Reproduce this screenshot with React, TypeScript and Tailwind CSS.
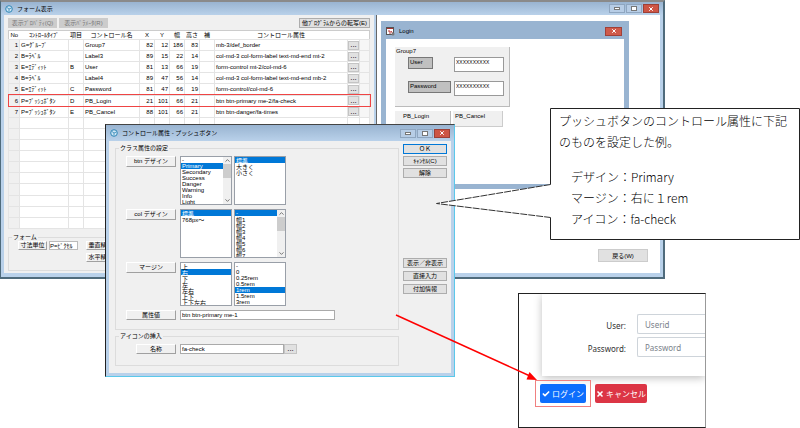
import React from "react";
import { Check, ChevronDown, ChevronUp, X } from "lucide-react";
import clsx from "clsx";

const controls = [
  { type: "G=ｸﾞﾙｰﾌﾟ", item: "", name: "Group7", x: 82, y: 12, w: 186, h: 83, attr: "mb-3/def_border" },
  { type: "B=ﾗﾍﾞﾙ", item: "", name: "Label3", x: 89, y: 15, w: 22, h: 14, attr: "col-md-3 col-form-label text-md-end mt-2" },
  { type: "E=ｴﾃﾞｨｯﾄ", item: "B", name: "User", x: 81, y: 13, w: 66, h: 19, attr: "form-control mt-2/col-md-6" },
  { type: "B=ﾗﾍﾞﾙ", item: "", name: "Label4", x: 89, y: 47, w: 56, h: 14, attr: "col-md-3 col-form-label text-md-end mb-2" },
  { type: "E=ｴﾃﾞｨｯﾄ", item: "C", name: "Password", x: 81, y: 47, w: 66, h: 19, attr: "form-control/col-md-6" },
  { type: "P=ﾌﾟｯｼｭﾎﾞﾀﾝ", item: "D", name: "PB_Login", x: 21, y: 101, w: 66, h: 21, attr: "btn btn-primary me-2/fa-check" },
  { type: "P=ﾌﾟｯｼｭﾎﾞﾀﾝ", item: "E", name: "PB_Cancel", x: 88, y: 101, w: 66, h: 21, attr: "btn btn-danger/fa-times" },
];

const emptyRows = Array.from({ length: 10 }, (_, i) => i);

const SELECTED_ROW = 5;

const uiFont = "font-['Liberation_Sans','Noto_Sans_CJK_JP',sans-serif]";

export default function App() {
  return (
    <main className={clsx("relative min-h-screen overflow-hidden bg-white text-[6px] leading-[8px] text-black", uiFont)}>
      <FormWindow />
      <AttributeDialog />
      <Callout />
      <BrowserPreview />
      <svg className="pointer-events-none absolute top-[308px] left-[390px]" width="150" height="76" viewBox="0 0 150 76">
        <path d="M6 7L140 68" stroke="#f00" strokeWidth="1.5" />
        <path d="M147 72L136.500 71.500L139.500 64Z" fill="#f00" />
      </svg>
    </main>
  );
}

function FormWindow() {
  return (
    <section className="absolute top-0 left-0 isolate flex h-[279px] w-[665px] flex-col border border-t-2 border-r-2 border-b-2 border-[#4f6b7c] border-t-[#8a8a8a] bg-[#b9d1ea]">
      <header className="flex h-[13px] shrink-0 items-center gap-1 bg-linear-to-b from-[#99b4d1] to-[#b9d1ea] pr-1 pl-1">
        <AppIcon />
        <h1 className="grow">フォーム表示</h1>
        <WindowButtons />
      </header>
      <div className="mx-[3px] mb-1 flex min-h-0 grow">
        <div className="flex w-[370px] flex-col bg-[#f0f0f0] px-1 pt-[3px] pb-[2px]">
          <div className="flex gap-[2px]">
            <button className="h-[10px] w-[49px] bg-[#ccc] text-[#777]">表示ﾌﾟﾛﾊﾟﾃｨ(Q)</button>
            <button className="h-[10px] w-[49px] bg-[#ccc] text-[#777]">表示ﾊﾟﾗﾒｰﾀ(R)</button>
            <button className="ml-auto h-[10px] w-[71px] border border-[#adadad] bg-[#e1e1e1] leading-[7px]">
              他ﾌﾟﾛｸﾞﾗﾑからの転写(E)
            </button>
          </div>
          <div className="mt-[2px] min-h-0 grow">
            <ControlTable />
          </div>
          <FormUnits />
        </div>
        <div className="ml-[2px] flex grow flex-col border-l border-[#666] bg-white pt-[6px] pr-[12px] pb-[11px] pl-[4px]">
          <LoginWindow />
          <button className="mt-auto h-[13px] w-[50px] self-end border border-[#ccc] bg-[#e1e1e1]">戻る(W)</button>
        </div>
      </div>
    </section>
  );
}

function ControlTable() {
  return (
    <table className="h-full w-full table-fixed border-collapse border border-[#ccc] bg-white">
      <colgroup>
        <col className="w-[11px]" />
        <col className="w-[49px]" />
        <col className="w-[15px]" />
        <col className="w-[56px]" />
        <col className="w-[15px]" />
        <col className="w-[15px]" />
        <col className="w-[15px]" />
        <col className="w-[15px]" />
        <col className="w-[15px]" />
        <col />
        <col className="w-[12px]" />
        <col className="w-[10px]" />
      </colgroup>
      <thead>
        <tr className="h-[8px]">
          {["No", "ｺﾝﾄﾛｰﾙﾀｲﾌﾟ", "項目", "コントロール名", "X", "Y", "幅", "高さ", "補", "コントロール属性", "", ""].map((title, i) => (
            <th key={i} className="p-0 font-normal whitespace-nowrap leading-[8px]">
              {title}
            </th>
          ))}
        </tr>
      </thead>
      <tbody>
        {controls.map((control, i) => (
          <tr key={i} className={clsx("h-[11px]", i === SELECTED_ROW && "relative z-10 outline-1 outline-[#ef4444]")}>
            <Cell className="bg-[#f0f0f0] text-right">{i + 1}</Cell>
            <Cell>{control.type}</Cell>
            <Cell>{control.item}</Cell>
            <Cell>{control.name}</Cell>
            <Cell className="text-right">{control.x}</Cell>
            <Cell className="text-right">{control.y}</Cell>
            <Cell className="text-right">{control.w}</Cell>
            <Cell className="text-right">{control.h}</Cell>
            <Cell />
            <Cell>{control.attr}</Cell>
            <td className="border-y border-[#e4e4e4] p-0">
              <button aria-label={`${control.name} 属性`} className="block h-[9px] w-[11px] border border-[#c4c4c4] bg-[#e1e1e1] text-[8px] leading-[4px]">
                ...
              </button>
            </td>
            <Cell className="bg-[#f6f6f6]" />
          </tr>
        ))}
        {emptyRows.map((row) => (
          <tr key={row} className="h-[11px]">
            <Cell className="bg-[#f0f0f0]" />
            {Array.from({ length: 11 }, (_, i) => (
              <Cell key={i} />
            ))}
          </tr>
        ))}
      </tbody>
    </table>
  );
}

function Cell({ className, children }: { className?: string; children?: React.ReactNode }) {
  return (
    <td className={clsx("border border-[#e4e4e4] px-[1px] py-0 leading-[8px] whitespace-nowrap", className)}>
      {children}
    </td>
  );
}

function FormUnits() {
  return (
    <fieldset className="mt-1 flex h-[38px] flex-col gap-[3px] border border-[#dcdcdc] pl-[9px]">
      <legend className="-ml-[6px] px-[1px]">フォーム</legend>
      <div className="flex gap-[2px]">
        <RaisedButton className="h-[9px] w-[29px]">寸法単位</RaisedButton>
        <input aria-label="寸法単位" readOnly defaultValue="P=ﾋﾟｸｾﾙ" className="h-[9px] w-[29px] border border-[#bbb] bg-white" />
        <RaisedButton className="ml-[6px] h-[9px] w-[29px]">垂直精度</RaisedButton>
      </div>
      <RaisedButton className="ml-[68px] h-[9px] w-[29px]">水平精度</RaisedButton>
    </fieldset>
  );
}

function LoginWindow() {
  return (
    <section className="flex h-[168px] w-[248px] flex-col bg-[#99b4d1] px-[5px] pb-[5px]">
      <header className="flex h-[18px] items-center gap-1 pt-[2px] pr-[2px]">
        <svg width="9" height="9" viewBox="0 0 9 9">
          <rect x=".5" y=".5" width="7" height="7" fill="#fff" stroke="#555" />
          <path d="M1 1.500h6" stroke="#a33" />
          <path d="M2 4h2v3M5 4l2 3" stroke="#b33" fill="none" />
          <circle cx="7" cy="7" r="1.500" fill="#777" />
        </svg>
        <h2 className="grow">Login</h2>
        <button aria-label="閉じる" className="flex h-[9px] w-[17px] items-center justify-center border border-[#a04038] bg-[#cf5a4a] text-white">
          <X size={6} strokeWidth={4} />
        </button>
      </header>
      <div className="grow bg-white pt-[8px] pl-[9px]">
        <div className="flex h-[60px] w-[115px] flex-col gap-[9px] border-r border-b border-[#bbb] bg-[#f0f0f0] pl-[1px]">
          <div className="-mb-[8px] leading-[9px]">Group7</div>
          <div className="flex items-start pl-[12px]">
            <div className="w-[46px]">
              <label htmlFor="preview-user" className="block h-[12px] w-[25px] border border-[#777] bg-[#c0c0c0] pl-[1px]">
                User
              </label>
            </div>
            <input id="preview-user" readOnly defaultValue="XXXXXXXXXX" className="h-[15px] w-[50px] border border-[#999] bg-white pb-[5px] pl-[1px] text-[5px]" />
          </div>
          <div className="flex items-start pl-[12px]">
            <div className="w-[46px]">
              <label htmlFor="preview-password" className="block h-[12px] w-[43px] border border-[#777] bg-[#c0c0c0] pl-[1px]">
                Password
              </label>
            </div>
            <input id="preview-password" readOnly defaultValue="XXXXXXXXXX" className="h-[15px] w-[50px] border border-[#999] bg-white pb-[5px] pl-[1px] text-[5px]" />
          </div>
        </div>
        <div className="mt-1 flex gap-[2px]">
          <button className="h-[16px] w-[56px] border-r border-b border-[#bbb] bg-[#f0f0f0] pb-[6px] pl-2 text-left">PB_Login</button>
          <button className="h-[16px] w-[50px] border-r border-b border-[#ccc] bg-[#f0f0f0] pb-[6px] pl-[2px] text-left">PB_Cancel</button>
        </div>
      </div>
    </section>
  );
}

function AttributeDialog() {
  return (
    <section className="absolute top-[124px] left-[105px] flex h-[253px] w-[350px] flex-col border border-[#5bc8ea] border-t-[#444] border-l-[#222] bg-[#b9d1ea]">
      <header className="flex h-[16px] shrink-0 items-center gap-1 bg-linear-to-b from-[#99b4d1] to-[#b9d1ea] px-1">
        <AppIcon />
        <h2 className="grow">コントロール属性 - プッシュボタン</h2>
        <WindowButtons />
      </header>
      <div className="mx-[3px] mb-[3px] flex grow gap-1 bg-[#f0f0f0] pt-[3px] pr-1 pb-1 pl-[6px]">
        <div className="flex grow flex-col gap-[2px]">
          <fieldset className="h-[186px] border border-[#dcdcdc] pl-[10px]">
            <legend className="-ml-[7px] px-[1px]">クラス属性の設定</legend>
            <div className="flex flex-col gap-1 pt-1">
              <ListRow
                label="btn デザイン"
                height="h-[49px]"
                first={["-", "Primary", "Secondary", "Success", "Danger", "Warning", "Info", "Light"]}
                firstValue="Primary"
                firstScroll
                second={["標準", "大きく", "小さく"]}
                secondValue="標準"
              />
              <ListRow
                label="col デザイン"
                height="h-[49px]"
                first={["標準", "768px～"]}
                firstValue="標準"
                second={["-", "幅1", "幅2", "幅3", "幅4", "幅5", "幅6", "幅7"]}
                secondValue="-"
                secondScroll
              />
              <ListRow
                label="マージン"
                height="h-[44px]"
                first={["上", "右", "下", "左", "左右", "上下", "上下左右"]}
                firstValue="右"
                second={["-", "0", "0.25rem", "0.5rem", "1rem", "1.5rem", "3rem"]}
                secondValue="1rem"
              />
              <div className="flex gap-1">
                <RaisedButton className="h-[10px] w-[50px]">属性値</RaisedButton>
                <TextBox label="属性値" value="btn btn-primary me-1" className="w-[155px]" />
              </div>
            </div>
          </fieldset>
          <fieldset className="h-[34px] border border-[#dcdcdc] pl-[20px]">
            <legend className="-ml-[17px] px-[1px]">アイコンの挿入</legend>
            <div className="flex gap-1 pt-1">
              <RaisedButton className="h-[10px] w-[40px]">名称</RaisedButton>
              <div className="flex">
                <TextBox label="名称" value="fa-check" className="w-[104px]" />
                <button aria-label="アイコンを選択" className="h-[10px] w-[13px] border border-[#c4c4c4] bg-[#e1e1e1] text-[8px] leading-[4px]">
                  ...
                </button>
              </div>
            </div>
          </fieldset>
        </div>
        <div className="flex w-[44px] flex-col gap-[2px]">
          <DialogButton primary>ＯＫ</DialogButton>
          <DialogButton>ｷｬﾝｾﾙ(C)</DialogButton>
          <DialogButton>解除</DialogButton>
          <div className="mt-[78px] flex flex-col gap-[3px]">
            <DialogButton>表示／非表示</DialogButton>
            <DialogButton>直接入力</DialogButton>
            <DialogButton>付加情報</DialogButton>
          </div>
        </div>
      </div>
    </section>
  );
}

interface ListRowProps {
  label: string;
  height: string;
  first: string[];
  firstValue: string;
  firstScroll?: boolean;
  second: string[];
  secondValue: string;
  secondScroll?: boolean;
}

function ListRow({ label, height, first, firstValue, firstScroll, second, secondValue, secondScroll }: ListRowProps) {
  return (
    <div className={clsx("flex items-start", height)}>
      <RaisedButton className="mr-1 h-[11px] w-[50px]">{label}</RaisedButton>
      <ListBox label={`${label} 1`} options={first} value={firstValue} scroll={firstScroll} />
      <div className="w-[2px]" />
      <ListBox label={`${label} 2`} options={second} value={secondValue} scroll={secondScroll} />
    </div>
  );
}

function ListBox({ label, options, value, scroll }: { label: string; options: string[]; value: string; scroll?: boolean }) {
  return (
    <div className="flex h-full w-[52px] border border-[#999fa8] bg-white">
      <select
        aria-label={label}
        size={options.length}
        defaultValue={value}
        className="h-full min-w-0 grow overflow-hidden bg-white p-0 leading-[6px] [scrollbar-width:none]"
      >
        {options.map((option) => (
          <option
            key={option}
            className="flex h-[6px] min-h-0 items-center p-0 pl-[1px] leading-[6px] checked:bg-linear-to-b checked:from-[#0078d7] checked:to-[#0078d7] checked:text-white"
          >
            {option}
          </option>
        ))}
      </select>
      {scroll && (
        <div className="flex w-[8px] flex-col items-center bg-[#f0f0f0]">
          <ChevronUp size={7} strokeWidth={3} className="text-[#666]" />
          <div className="h-[14px] w-full bg-[#cdcdcd]" />
          <ChevronDown size={7} strokeWidth={3} className="mt-auto text-[#666]" />
        </div>
      )}
    </div>
  );
}

function TextBox({ label, value, className }: { label: string; value: string; className: string }) {
  return (
    <input
      aria-label={label}
      defaultValue={value}
      className={clsx("h-[10px] border border-[#aaa] bg-white pl-[1px] leading-[8px]", className)}
    />
  );
}

function RaisedButton({ className, children }: { className: string; children: React.ReactNode }) {
  return (
    <button
      className={clsx(
        "shrink-0 border border-t-white border-r-[#a0a0a0] border-b-[#a0a0a0] border-l-white bg-[#f0f0f0] leading-[7px] whitespace-nowrap",
        className
      )}
    >
      {children}
    </button>
  );
}

function DialogButton({ primary, children }: { primary?: boolean; children: React.ReactNode }) {
  return (
    <button
      className={clsx(
        "h-[10px] border bg-[#e1e1e1] leading-[7px] whitespace-nowrap",
        primary ? "border-[#0078d7]" : "border-[#adadad]"
      )}
    >
      {children}
    </button>
  );
}

function AppIcon() {
  return (
    <svg width="8" height="8" viewBox="0 0 8 8" fill="none">
      <circle cx="4" cy="4" r="3.300" fill="#cfe6f5" stroke="#2f86b5" />
      <path d="M2 2.500l2 1.500l2.500-1M4 4v2.500" stroke="#2f86b5" strokeWidth=".8" />
    </svg>
  );
}

function WindowButtons() {
  return (
    <div className="flex gap-[1px]">
      <button aria-label="最小化" className="flex h-[9px] w-[16px] items-center justify-center border border-[#8fa6c0] bg-[#b7cde6]">
        <span className="h-[3px] w-[6px] border border-[#777] bg-white" />
      </button>
      <button aria-label="最大化" className="flex h-[9px] w-[16px] items-center justify-center border border-[#8fa6c0] bg-[#b7cde6]">
        <span className="h-[5px] w-[6px] border border-[#777] bg-white" />
      </button>
      <button aria-label="閉じる" className="flex h-[9px] w-[16px] items-center justify-center border border-[#9c4038] bg-[#cd5545] text-white">
        <X size={6} strokeWidth={4} />
      </button>
    </div>
  );
}

function Callout() {
  return (
    <>
      <svg className="absolute top-[107px] left-[430px]" width="370" height="135" viewBox="0 0 370 135">
        <path d="M120.500 1.500H369.500V132.500H120.500V110.500L6.500 96.500L120.500 77.500Z" fill="#fff" />
        <path d="M120.500 77.500V1.500H369.500V132.500H120.500V110.500" fill="none" stroke="#222" />
        <path d="M120.500 77.500L6.500 96.500L120.500 110.500" fill="none" stroke="#333" strokeDasharray="7 1" />
      </svg>
      <div className="absolute top-[110px] left-[559px] font-['Noto_Sans_CJK_JP',sans-serif] text-[12px] leading-[21px] font-light">
        <p>
          プッシュボタンのコントロール属性に下記
          <br />
          のものを設定した例。
        </p>
        <ul className="mt-[14px] pl-3">
          <li>デザイン：Primary</li>
          <li>マージン：右に１rem</li>
          <li>アイコン：fa-check</li>
        </ul>
      </div>
    </>
  );
}

function BrowserPreview() {
  return (
    <section className="absolute top-[293px] left-[518px] flex h-[135px] w-[188px] flex-col overflow-hidden border border-[#222] border-r-[#999] bg-white font-['Noto_Sans','Noto_Sans_CJK_JP',sans-serif] text-[8px] leading-[12px] text-[#333]">
      <div className="ml-[23px] flex h-[82px] shrink-0 flex-col gap-[3px] pt-[20px] shadow-[0_2px_8px_rgba(0,0,0,0.25)]">
        <PreviewField id="userid" label="User:" placeholder="Userid" />
        <PreviewField id="password" label="Password:" placeholder="Password" />
      </div>
      <div className="mt-1 ml-4 flex items-center gap-1">
        <div className="border border-[#f08080] px-1 py-[3px]">
          <button className="flex h-[19px] w-[46px] items-center justify-center gap-[2px] rounded-[2px] bg-[#0d6efd] whitespace-nowrap text-white">
            <Check size={8} strokeWidth={5} />
            ログイン
          </button>
        </div>
        <button className="flex h-[19px] w-[52px] items-center justify-center gap-[2px] rounded-[2px] bg-[#dc3545] whitespace-nowrap text-white">
          <X size={8} strokeWidth={5} />
          キャンセル
        </button>
      </div>
    </section>
  );
}

function PreviewField({ id, label, placeholder }: { id: string; label: string; placeholder: string }) {
  return (
    <div className="flex items-center">
      <label htmlFor={id} className="w-[84px] shrink-0 pt-1 text-right">
        {label}
      </label>
      <input
        id={id}
        placeholder={placeholder}
        className="ml-[11px] h-[20px] w-0 grow rounded-l-[2px] border border-r-0 border-[#ced4da] bg-white pl-[7px] placeholder:text-[#7a828a]"
      />
    </div>
  );
}
